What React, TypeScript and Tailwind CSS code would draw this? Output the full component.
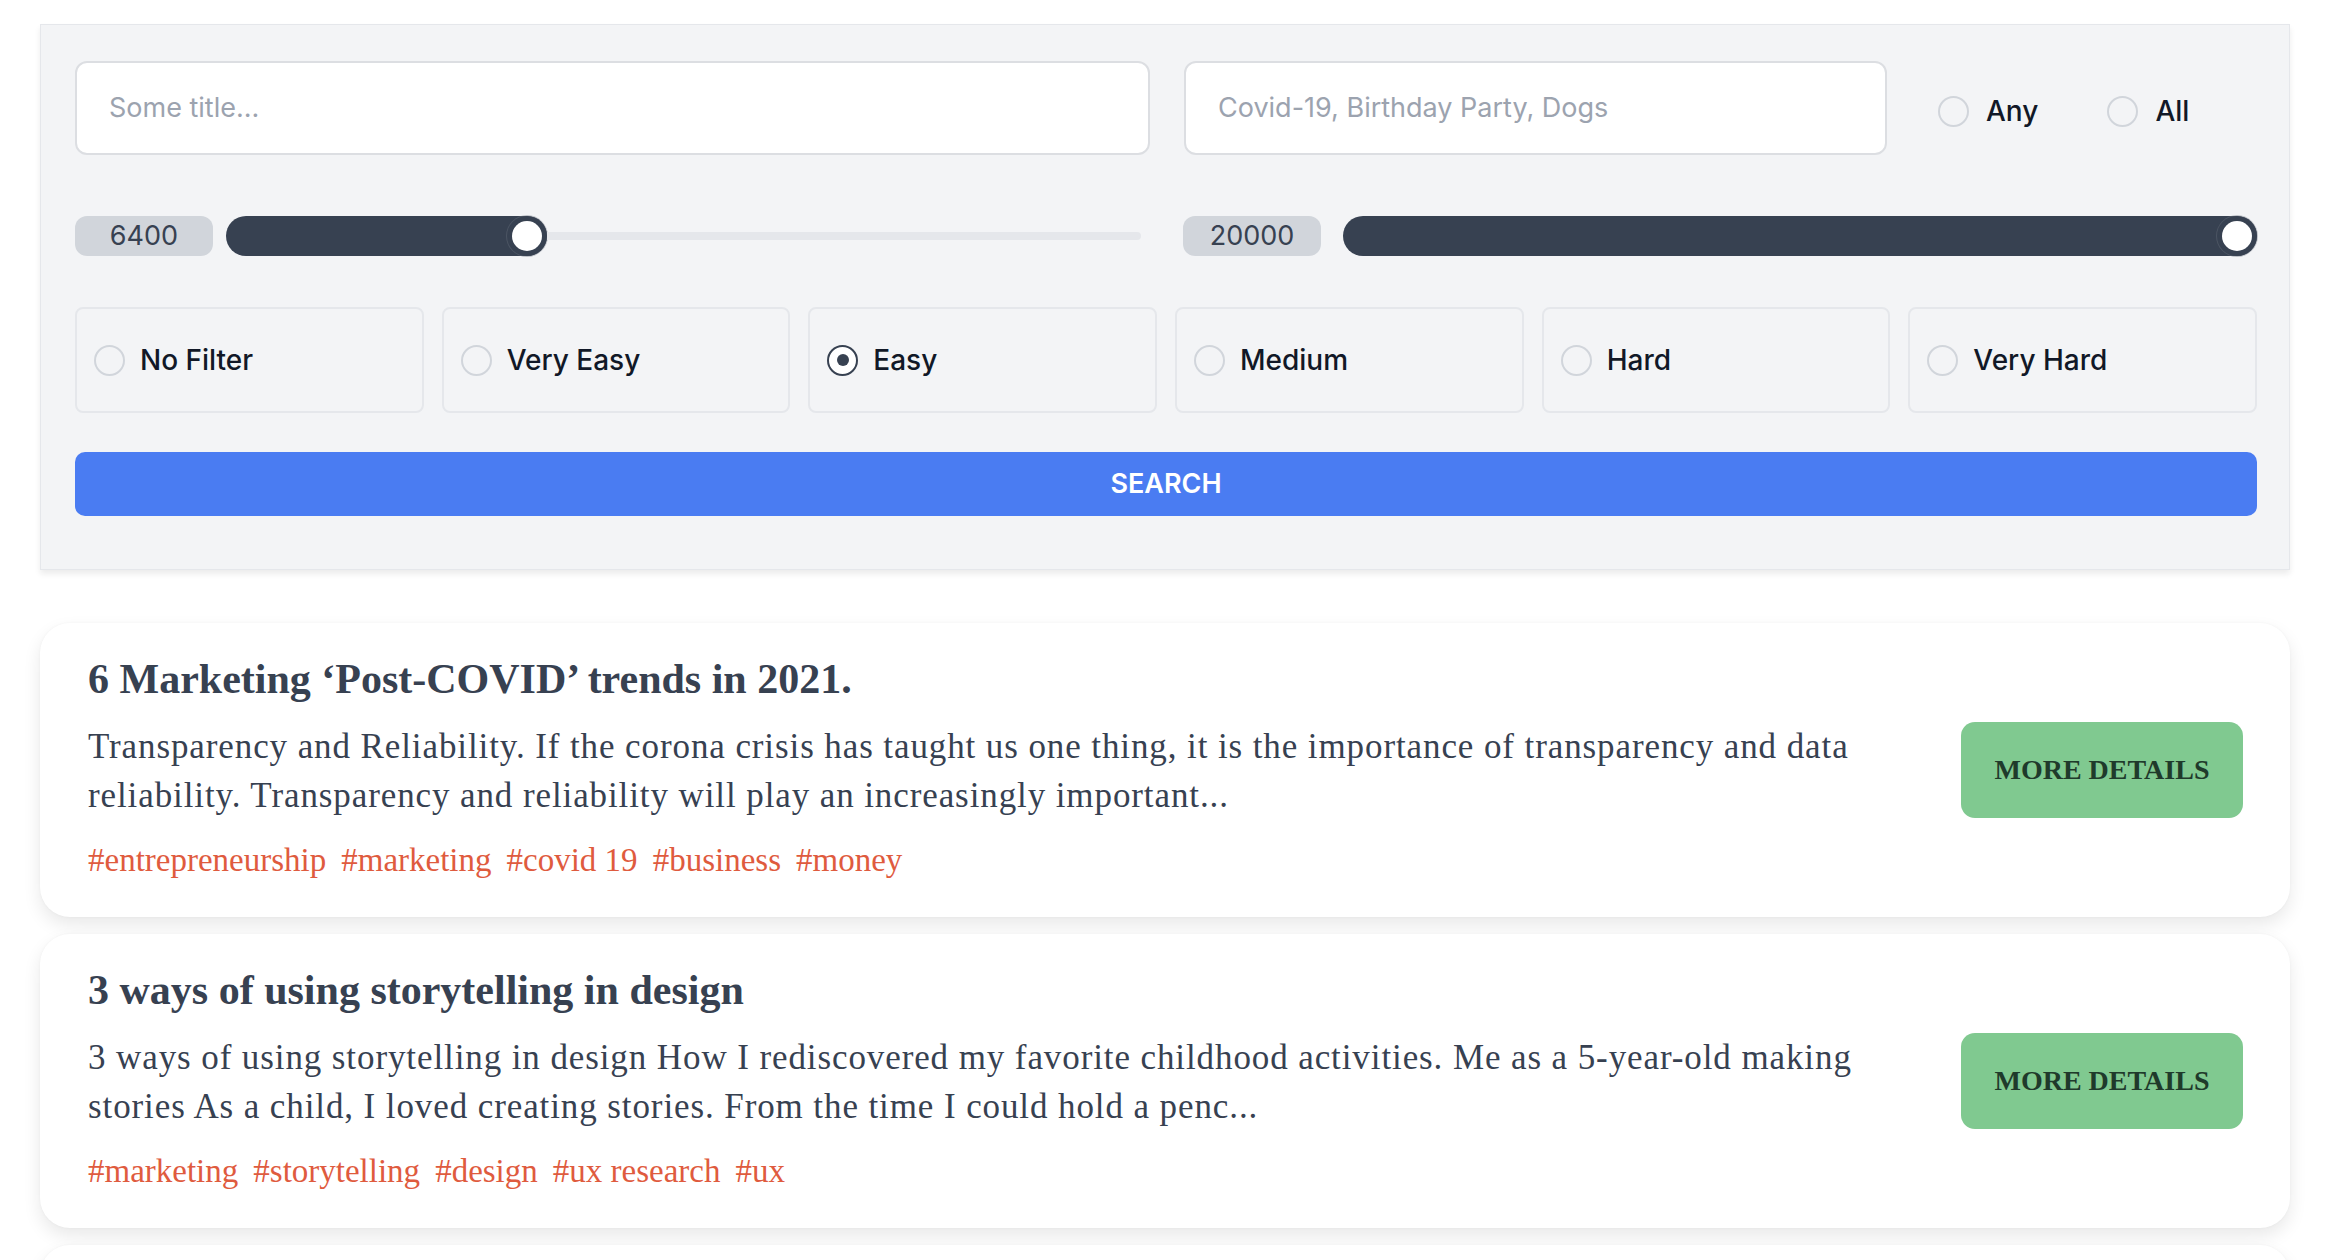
import React from 'react'

const difficulties = ['No Filter', 'Very Easy', 'Easy', 'Medium', 'Hard', 'Very Hard']

const posts = [
  {
    id: 1,
    title: '6 Marketing ‘Post-COVID’ trends in 2021.',
    excerpt:
      'Transparency and Reliability. If the corona crisis has taught us one thing, it is the importance of transparency and data reliability. Transparency and reliability will play an increasingly important...',
    tags: ['entrepreneurship', 'marketing', 'covid 19', 'business', 'money']
  },
  {
    id: 2,
    title: '3 ways of using storytelling in design',
    excerpt:
      '3 ways of using storytelling in design How I rediscovered my favorite childhood activities. Me as a 5-year-old making stories As a child, I loved creating stories. From the time I could hold a penc...',
    tags: ['marketing', 'storytelling', 'design', 'ux research', 'ux']
  },
  {
    id: 3,
    title: 'Why your brand needs a content strategy',
    excerpt:
      'Content is everywhere. A clear strategy helps you decide what to publish, where to publish it and how to measure what really works for your audience...',
    tags: ['content', 'branding']
  }
]

function Radio({ checked = false }: { checked?: boolean }) {
  if (checked) {
    return (
      <div className="flex h-[31px] w-[31px] shrink-0 items-center justify-center rounded-full border-2 border-[#374151] bg-white">
        <div className="h-[12px] w-[12px] rounded-full bg-[#374151]" />
      </div>
    )
  }
  return <div className="h-[31px] w-[31px] shrink-0 rounded-full border-2 border-[#d1d5db]" />
}

function Slider({ value, fill, gap }: { value: string; fill: number | null; gap: number }) {
  return (
    <div className="flex items-center">
      <div className="flex h-[40px] w-[138px] shrink-0 items-center justify-center rounded-xl bg-[#d1d5db] text-[27px] text-[#374151]">
        {value}
      </div>
      <div className="flex flex-1 items-center" style={{ marginLeft: gap }}>
        <div
          className="flex h-[40px] shrink-0 items-center justify-end rounded-full bg-[#374151] pr-[5px]"
          style={fill === null ? { flex: 1 } : { width: fill }}
        >
          <div className="h-[30px] w-[30px] rounded-full bg-white ring-1 ring-[#6b7280]/40 ring-offset-[5px] ring-offset-[#374151]" />
        </div>
        {fill !== null && <div className="h-[8px] flex-1 rounded-r-full bg-[#e5e7eb]" />}
      </div>
    </div>
  )
}

export default function App() {
  return (
    <div className="min-h-screen bg-white font-['Inter','Noto_Sans',sans-serif]">
      <div className="px-[40px] pt-[24px]">
        {/* Search panel */}
        <div className="border border-[#e5e7eb] bg-[#f3f4f6] pb-[53px] pl-[34px] pr-[32px] pt-[36px] shadow-[0_4px_6px_rgba(0,0,0,0.08)]">
          <div className="flex items-center">
            <div className="flex h-[94px] w-[1075px] items-center rounded-xl border-2 border-[#dcdee2] bg-white pl-[32px] text-[27px] text-[#9ca3af]">
              Some title...
            </div>
            <div className="ml-[34px] flex h-[94px] w-[703px] items-center rounded-xl border-2 border-[#dcdee2] bg-white pl-[32px] text-[27px] text-[#9ca3af]">
              Covid-19, Birthday Party, Dogs
            </div>
            <div className="ml-[51px] flex items-center pt-[6px]">
              <Radio />
              <span className="ml-[17px] text-[28px] font-medium text-[#111827]">Any</span>
              <div className="ml-[69px] flex">
                <Radio />
              </div>
              <span className="ml-[17px] text-[28px] font-medium text-[#111827]">All</span>
            </div>
          </div>

          <div className="mt-[61px] grid grid-cols-[1066px_1fr] gap-[42px]">
            <Slider value="6400" fill={321} gap={13} />
            <Slider value="20000" fill={null} gap={22} />
          </div>

          <div className="mt-[51px] grid grid-cols-6 gap-[18px]">
            {difficulties.map((d) => (
              <div
                key={d}
                className="flex h-[106px] items-center rounded-lg border-2 border-[#e5e7eb] pl-[17px]"
              >
                <Radio checked={d === 'Easy'} />
                <span className="ml-[15px] text-[28px] font-medium text-[#111827]">{d}</span>
              </div>
            ))}
          </div>

          <button className="mt-[39px] flex h-[64px] w-full items-center justify-center rounded-[10px] bg-[#4a7cf2] text-[27px] font-semibold uppercase text-white">
            Search
          </button>
        </div>

        {/* Results */}
        <div className="mt-[53px] flex flex-col gap-[17px] font-['Liberation_Serif','Times_New_Roman',serif]">
          {posts.map((post) => (
            <div
              key={post.id}
              className="flex h-[294px] items-center justify-between rounded-[30px] bg-white pl-[48px] pr-[47px] shadow-[0_8px_18px_rgba(0,0,0,0.09),0_0_3px_rgba(0,0,0,0.04)]"
            >
              <div className="w-[1785px] self-start pt-[31px]">
                <h2 className="text-[42px] font-bold leading-[50px] text-[#374151]">{post.title}</h2>
                <p className="mt-[18px] text-[35px] leading-[49px] tracking-[0.9px] text-[#374151]">{post.excerpt}</p>
                <div className="mt-[18px] flex flex-wrap gap-x-[15px] text-[33px] leading-[44px] text-[#df5b3e]">
                  {post.tags.map((t) => (
                    <span key={t}>#{t}</span>
                  ))}
                </div>
              </div>
              <button className="h-[96px] w-[282px] shrink-0 rounded-[14px] bg-[#80c990] text-[28px] font-bold uppercase text-[#1f3a2b]">
                More Details
              </button>
            </div>
          ))}
        </div>
      </div>
    </div>
  )
}
